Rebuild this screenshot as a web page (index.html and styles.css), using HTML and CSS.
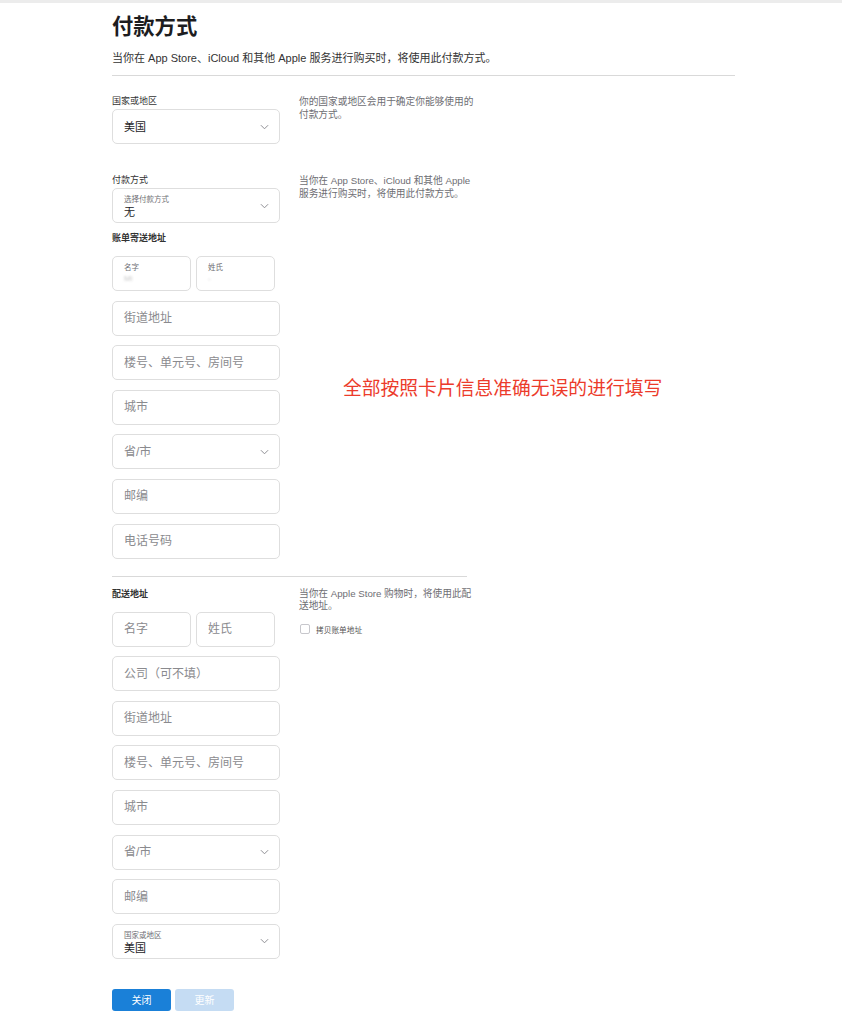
FILE: index.html
```html
<!DOCTYPE html>
<html lang="zh-CN">
<head>
<meta charset="utf-8">
<title>付款方式</title>
<link rel="stylesheet" href="styles.css">
</head>
<body>
<div class="topbar"></div>
<main class="page">
  <h1 class="title">付款方式</h1>
  <p class="subtitle">当你在 App Store、iCloud 和其他 Apple 服务进行购买时，将使用此付款方式。</p>
  <hr class="rule">

  <section class="section first">
    <div class="left">
      <div class="label">国家或地区</div>
      <div class="field select"><span class="value">美国</span><svg class="chev" viewBox="0 0 10 6"><path d="M1 1l4 4 4-4"/></svg></div>
    </div>
    <p class="desc">你的国家或地区会用于确定你能够使用的付款方式。</p>
  </section>

  <section class="section second">
    <div class="left">
      <div class="label">付款方式</div>
      <div class="field select stacked">
        <div class="stack"><span class="mini">选择付款方式</span><span class="value">无</span></div>
        <svg class="chev" viewBox="0 0 10 6"><path d="M1 1l4 4 4-4"/></svg>
      </div>
      <div class="label bold billing">账单寄送地址</div>
      <div class="rows">
        <div class="pair">
          <div class="field stacked"><div class="stack"><span class="mini">名字</span><span class="blur">Mi</span></div></div>
          <div class="field stacked"><div class="stack"><span class="mini">姓氏</span><span class="blur">-</span></div></div>
        </div>
        <div class="field"><span class="ph">街道地址</span></div>
        <div class="field"><span class="ph">楼号、单元号、房间号</span></div>
        <div class="field"><span class="ph">城市</span></div>
        <div class="field select"><span class="ph">省/市</span><svg class="chev" viewBox="0 0 10 6"><path d="M1 1l4 4 4-4"/></svg></div>
        <div class="field"><span class="ph">邮编</span></div>
        <div class="field"><span class="ph">电话号码</span></div>
      </div>
    </div>
    <p class="desc">当你在 App Store、iCloud 和其他 Apple 服务进行购买时，将使用此付款方式。</p>
  </section>

  <hr class="rule short">

  <section class="section third">
    <div class="left">
      <div class="label bold">配送地址</div>
      <div class="rows">
        <div class="pair">
          <div class="field"><span class="ph">名字</span></div>
          <div class="field"><span class="ph">姓氏</span></div>
        </div>
        <div class="field"><span class="ph">公司（可不填）</span></div>
        <div class="field"><span class="ph">街道地址</span></div>
        <div class="field"><span class="ph">楼号、单元号、房间号</span></div>
        <div class="field"><span class="ph">城市</span></div>
        <div class="field select"><span class="ph">省/市</span><svg class="chev" viewBox="0 0 10 6"><path d="M1 1l4 4 4-4"/></svg></div>
        <div class="field"><span class="ph">邮编</span></div>
        <div class="field select stacked">
          <div class="stack"><span class="mini">国家或地区</span><span class="value">美国</span></div>
          <svg class="chev" viewBox="0 0 10 6"><path d="M1 1l4 4 4-4"/></svg>
        </div>
      </div>
    </div>
    <div class="right">
      <p class="desc">当你在 Apple Store 购物时，将使用此配送地址。</p>
      <label class="check"><span class="box"></span><span>拷贝账单地址</span></label>
    </div>
  </section>

  <div class="buttons">
    <button class="btn primary">关闭</button>
    <button class="btn disabled">更新</button>
  </div>

  <div class="note">全部按照卡片信息准确无误的进行填写</div>
</main>
</body>
</html>
```

FILE: styles.css
```css
* { box-sizing: border-box; }
html, body { margin: 0; padding: 0; background: #fff; }
body {
  font-family: "Liberation Sans", "Noto Sans CJK SC", sans-serif;
  color: #1d1d1f;
}
.topbar { height: 3px; background: #ececec; }
.page {
  position: relative;
  width: 735px;
  padding: 10px 0 0 112px;
}
.title {
  margin: 0;
  font-size: 21.3px;
  line-height: 28px;
  font-weight: 700;
  color: #1d1d1f;
}
.subtitle {
  margin: 9px 0 0;
  font-size: 11px;
  line-height: 16px;
  color: #333;
}
.rule {
  margin: 9px 0 0;
  border: 0;
  border-top: 1px solid #d9d9d9;
  height: 0;
}
.rule.short { width: 355px; margin-top: 17px; }

.section {
  display: grid;
  grid-template-columns: 168px 180px;
  column-gap: 19px;
  align-items: start;
}
.section.first { margin-top: 19px; }
.section.second { margin-top: 30px; }
.section.third { margin-top: 11px; }

.label {
  font-size: 9px;
  line-height: 13px;
  color: #333;
  margin-bottom: 1px;
}
.label.bold { font-weight: 700; color: #333; }
.label.billing { margin-top: 9px; margin-bottom: 11px; }
.section.third .label { margin-bottom: 11px; }

.desc {
  margin: 0;
  font-size: 9.7px;
  line-height: 13px;
  color: #6e6e73;
  width: 178px;
}
.section.third .desc { line-height: 12.5px; }

.field {
  height: 35px;
  border: 1px solid #dedede;
  border-radius: 5px;
  background: #fff;
  display: flex;
  align-items: center;
  padding: 0 11px;
}
.select { justify-content: space-between; padding-right: 10px; }
.value { font-size: 11px; line-height: 14px; color: #1d1d1f; }
.ph { font-size: 12px; line-height: 16px; color: #8a8a8e; }
.stack { display: flex; flex-direction: column; }
.mini { font-size: 7.5px; line-height: 10px; color: #6e6e73; }
.stacked { align-items: flex-start; padding-top: 6px; }
.stacked .chev { align-self: center; margin-top: -6px; }
.blur { font-size: 8px; line-height: 12px; color: #c8c8c8; filter: blur(1px); }

.chev { width: 9px; height: 6px; }
.chev path { fill: none; stroke: #8e8e93; stroke-width: 1.1; }

.rows { display: flex; flex-direction: column; gap: 9.6px; }
.pair { display: flex; gap: 5px; width: 163px; }
.pair .field { flex: 1; }

.note {
  position: absolute;
  left: 343px;
  top: 371px;
  font-family: "Noto Sans CJK SC", sans-serif;
  font-size: 18.8px;
  line-height: 26px;
  color: #ec3b2b;
  white-space: nowrap;
}

.right { display: flex; flex-direction: column; }
.check {
  display: flex;
  align-items: center;
  gap: 6px;
  margin-top: 11px;
  font-size: 7.7px;
  color: #555;
}
.check .box {
  width: 10px;
  height: 10px;
  border: 1px solid #c7c7cc;
  border-radius: 2px;
  margin-left: 1px;
}

.buttons { display: flex; gap: 4px; margin-top: 30px; }
.btn {
  width: 59px;
  height: 22px;
  border: 0;
  border-radius: 3px;
  font-family: "Noto Sans CJK SC", sans-serif;
  font-size: 10px;
  color: #fff;
  padding: 0;
}
.btn.primary { background: #1a80d8; }
.btn.disabled { background: #c5dcf3; }
```
